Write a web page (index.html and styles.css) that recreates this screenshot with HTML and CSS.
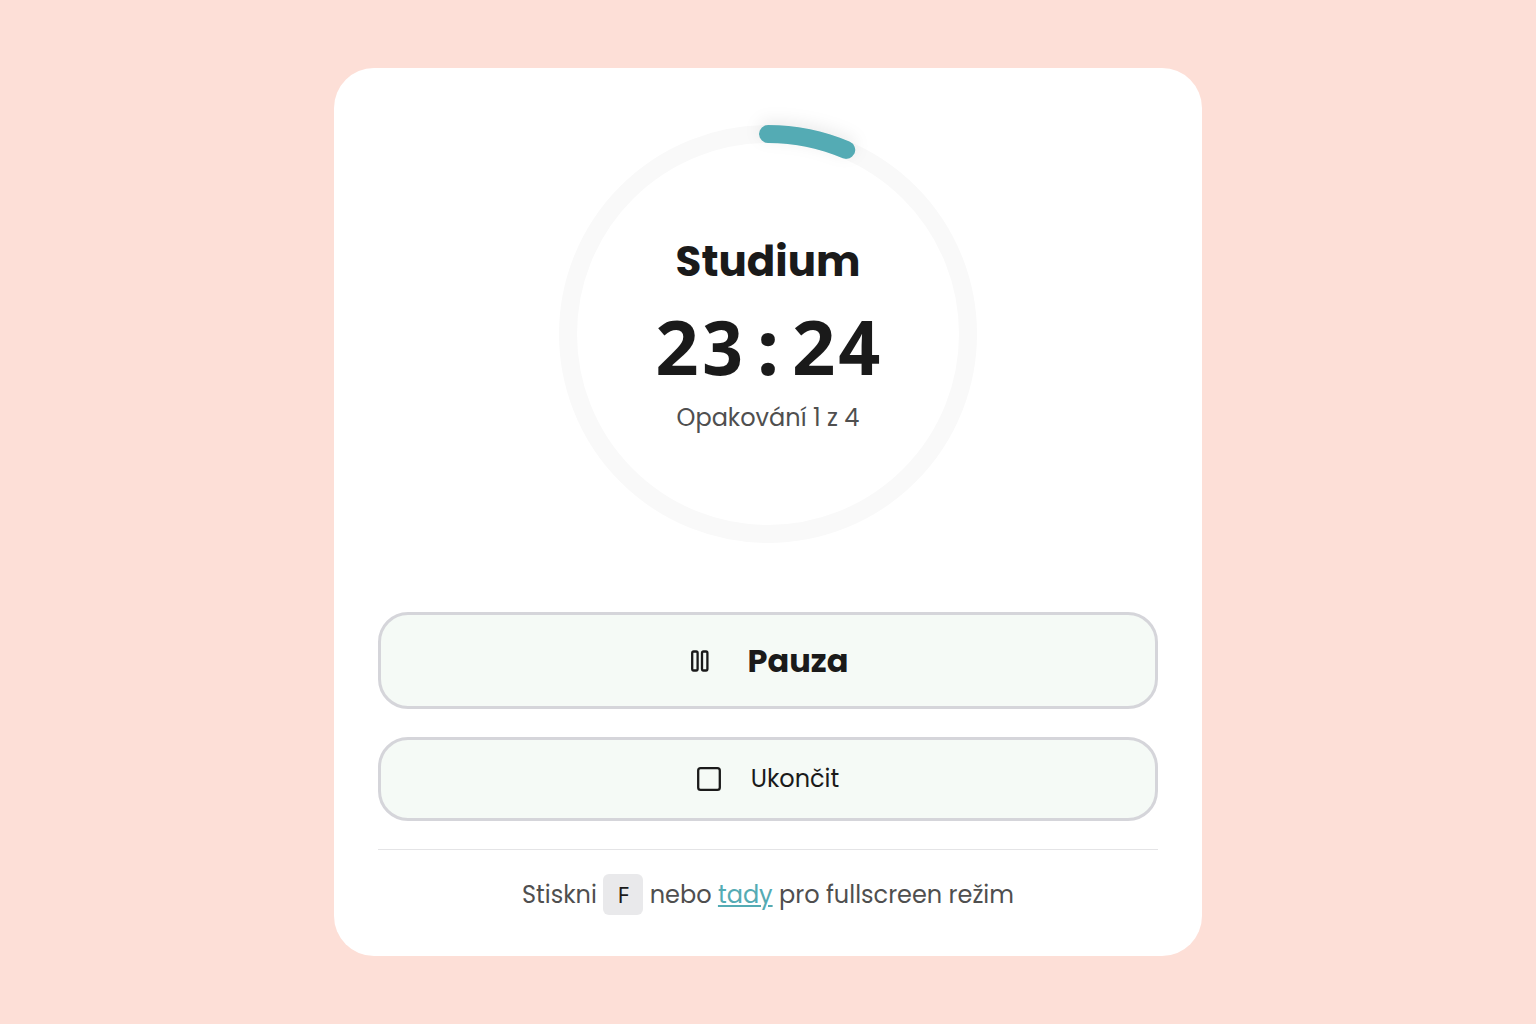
FILE: index.html
```html
<!DOCTYPE html>
<html lang="cs">
<head>
  <meta charset="UTF-8">
  <meta name="viewport" content="width=device-width, initial-scale=1">
  <title>Studium</title>
  <link rel="stylesheet" href="styles.css">
</head>
<body>
  <main class="card">
    <section class="timer">
      <svg class="ring" viewBox="0 0 420 420" aria-hidden="true">
        <circle class="ring-track" cx="210" cy="210" r="200"/>
        <circle class="ring-progress" cx="210" cy="210" r="200" pathLength="1000" stroke-dasharray="64 1000" transform="rotate(-90 210 210)"/>
      </svg>
      <div class="timer-text">
        <h1>Studium</h1>
        <div class="time">23:24</div>
        <p class="round">Opakování 1 z 4</p>
      </div>
    </section>

    <div class="actions">
      <button type="button" class="btn btn-main">
        <svg class="icon" viewBox="0 0 24 24" aria-hidden="true">
          <rect x="4.2" y="2.5" width="5.4" height="19" rx="1.4"/>
          <rect x="14" y="2.5" width="5.4" height="19" rx="1.4"/>
        </svg>
        <span>Pauza</span>
      </button>
      <button type="button" class="btn">
        <svg class="icon" viewBox="0 0 24 24" aria-hidden="true">
          <rect x="1.2" y="1.2" width="21.6" height="21.6" rx="2.4"/>
        </svg>
        <span>Ukončit</span>
      </button>
    </div>

    <footer class="hint">
      Stiskni <kbd>F</kbd> nebo <a href="#">tady</a> pro fullscreen režim
    </footer>
  </main>
</body>
</html>
```

FILE: styles.css
```css
* {
  box-sizing: border-box;
}

body {
  margin: 0;
  min-height: 100vh;
  display: flex;
  align-items: center;
  justify-content: center;
  padding: 24px;
  font-family: Poppins, Inter, "Noto Sans", sans-serif;
  color: #1a1a1a;
  background: #fddfd7;
}

.card {
  width: 100%;
  max-width: 868px;
  padding: 56px 44px 41px;
  background: #fff;
  border-radius: 40px;
}

/* ring and text share one grid cell */
.timer {
  display: grid;
  place-items: center;
  margin-bottom: 68px;
}

.ring,
.timer-text {
  grid-area: 1 / 1;
}

.ring {
  width: 100%;
  max-width: 420px;
  overflow: visible;
}

.ring circle {
  fill: none;
  stroke-width: 18;
}

.ring .ring-track {
  stroke: #f9f9f9;
}

.ring .ring-progress {
  stroke: #54abb4;
  stroke-linecap: round;
  filter: drop-shadow(4px 0 8px rgba(0, 0, 0, 0.08));
}

.timer-text {
  text-align: center;
}

h1 {
  margin: 0;
  font-size: 42px;
  line-height: 60px;
  font-weight: 700;
}

.time {
  font-family: "Droid Sans Mono", "Noto Sans Mono", "DejaVu Sans Mono", monospace;
  font-size: 76px;
  line-height: 108px;
  font-weight: 700;
}

.round {
  margin: 0;
  font-size: 24px;
  line-height: 36px;
  color: #4f4f4f;
}

.actions {
  display: flex;
  flex-direction: column;
  gap: 28px;
}

.btn {
  display: flex;
  align-items: center;
  justify-content: center;
  gap: 30px;
  width: 100%;
  padding: 22px 24px;
  font-family: inherit;
  font-size: 24px;
  line-height: 34px;
  color: #1a1a1a;
  background: #f5faf6;
  border: 3px solid #d5d5da;
  border-radius: 30px;
  cursor: pointer;
}

.btn-main {
  gap: 36px;
  padding: 24px;
  font-size: 32px;
  line-height: 43px;
  font-weight: 700;
}

.icon {
  width: 24px;
  height: 24px;
  fill: none;
  stroke: #1a1a1a;
  stroke-width: 2.3;
}

.hint {
  margin-top: 28px;
  padding-top: 24px;
  border-top: 1px solid #e4e4e6;
  font-size: 24px;
  line-height: 40px;
  text-align: center;
  color: #4f4f4f;
}

kbd {
  display: inline-block;
  min-width: 40px;
  font-family: "Noto Sans", sans-serif;
  font-size: 22px;
  line-height: 41px;
  color: #1a1a1a;
  background: #e9e9eb;
  border-radius: 6px;
}

a {
  color: #54abb4;
}
```
